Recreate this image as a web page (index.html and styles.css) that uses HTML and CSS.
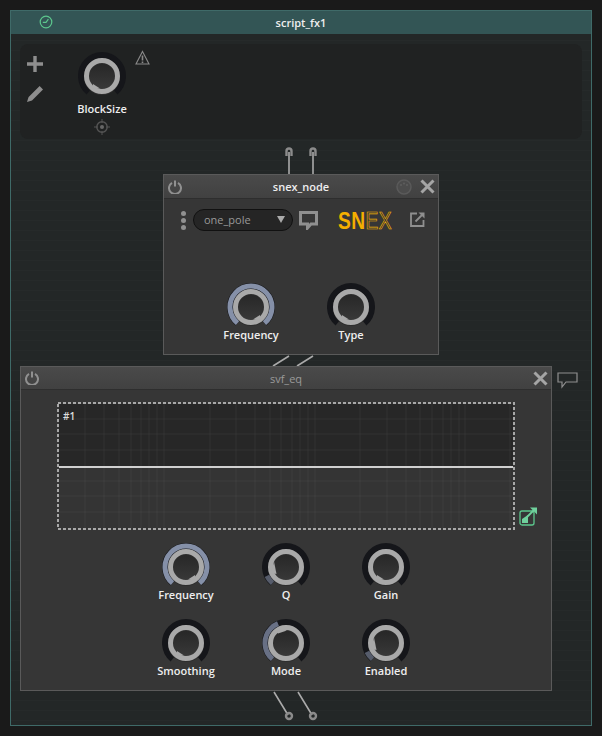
FILE: index.html

```html
<html>
<head>
    <title>script_fx1</title>
    <link rel="stylesheet" href="styles.css">
</head>
<body>
    <svg class="defs" width="0" height="0">
        <defs>
            <linearGradient id="knobFace" x1="0" y1="0" x2="0" y2="1">
                <stop offset="0" stop-color="#262626"/>
                <stop offset="1" stop-color="#393939"/>
            </linearGradient>
            <symbol id="knob" viewBox="0 0 48 48">
                <path d="M10.5 40.1A21 21 0 1 1 37.5 40.1" fill="none" stroke="#15161a" stroke-width="6"/>
                <circle cx="24" cy="24" r="14" fill="url(#knobFace)"/>
                <circle cx="24" cy="25" r="15.5" fill="none" stroke="#2e2e2e" stroke-width="5"/>
                <circle cx="24" cy="24" r="15.5" fill="none" stroke="#a9a9a9" stroke-width="5"/>
            </symbol>
            <symbol id="power" viewBox="0 0 14 14">
                <path d="M4 2.8A6 6 0 1 0 10 2.8" fill="none" stroke="#909090" stroke-width="2"/>
                <path d="M7 0.5V6.5" stroke="#909090" stroke-width="2"/>
            </symbol>
            <symbol id="close" viewBox="0 0 15 15">
                <path d="M1.5 1.5L13.5 13.5M13.5 1.5L1.5 13.5" stroke="#a5a5a5" stroke-width="3"/>
            </symbol>
        </defs>
    </svg>

    <div class="canvas">
        <div class="title-bar">
            <svg class="clock" width="14" height="14" viewBox="0 0 14 14">
                <circle cx="7" cy="7" r="5.8" fill="none" stroke="#5cc78d" stroke-width="1.2"/>
                <path d="M9.4 4.2L7 7.4H3.8" fill="none" stroke="#5cc78d" stroke-width="1.2"/>
            </svg>
            <span>script_fx1</span>
        </div>

        <div class="params">
            <div class="param-tools">
                <svg width="16" height="16" viewBox="0 0 16 16"><path d="M8 0V16M0 8H16" stroke="#8e8e8e" stroke-width="3.4"/></svg>
                <svg width="16" height="16" viewBox="0 0 16 16"><path d="M12.6 0L16 3.4 5 14.4 0 16 1.6 11z" fill="#8e8e8e"/></svg>
            </div>
            <div class="knob knob-big">
                <svg width="48" height="48" viewBox="0 0 48 48">
                    <use href="#knob"/>
                    <path class="tick" d="M15 32L22 36.500L15 37z"/>
                </svg>
                <label>BlockSize</label>
                <svg class="target" width="16" height="16" viewBox="0 0 16 16">
                    <circle cx="8" cy="8" r="5.200" fill="none" stroke="#555" stroke-width="1.400"/>
                    <circle cx="8" cy="8" r="2" fill="#666"/>
                    <path d="M8 0V4M8 12V16M0 8H4M12 8H16" stroke="#555"/>
                </svg>
            </div>
            <svg class="warning" width="15" height="15" viewBox="0 0 15 15">
                <path d="M7.500 1.500L14 14H1z" fill="none" stroke="#8a8a8a" stroke-width="1.100"/>
                <path d="M7.500 5.500V10.500M7.500 11.400V13" stroke="#8a8a8a" stroke-width="1.600"/>
            </svg>
        </div>

        <!-- cables between the nodes -->
        <svg class="cables" width="602" height="736" viewBox="0 0 602 736">
            <g fill="none" stroke="#aaa" stroke-width="1.600">
                <path d="M289 152V175M313 152V175"/>
                <path d="M273 366L289 356M297 366L313 356"/>
                <path d="M274 692L288 715M298 692L312 715"/>
            </g>
            <g fill="none" stroke="#8b8b8b" stroke-width="2.400">
                <path d="M286.500 156V151A2.500 2.500 0 0 1 291.500 151V156"/>
                <path d="M310.500 156V151A2.500 2.500 0 0 1 315.500 151V156"/>
                <circle cx="289" cy="716" r="3"/>
                <circle cx="313" cy="716" r="3"/>
            </g>
        </svg>

        <div class="node node-snex">
            <div class="node-header">
                <svg class="icon" width="14" height="14"><use href="#power"/></svg>
                <span class="node-title">snex_node</span>
                <svg class="midi" width="16" height="16" viewBox="0 0 16 16">
                    <circle cx="8" cy="8" r="7" fill="#4c4c4c" stroke="#5a5a5a" stroke-width="1.500"/>
                    <circle cx="5" cy="6" r="1" fill="#5e5e5e"/>
                    <circle cx="8" cy="4.500" r="1" fill="#5e5e5e"/>
                    <circle cx="11" cy="6" r="1" fill="#5e5e5e"/>
                </svg>
                <svg class="icon" width="15" height="15"><use href="#close"/></svg>
            </div>
            <div class="node-body">
                <div class="snex-tools">
                    <span class="dots"><i></i><i></i><i></i></span>
                    <div class="dropdown">one_pole<span class="arrow"></span></div>
                    <svg class="bubble" width="19" height="19" viewBox="0 0 19 19">
                        <path d="M1.500 1.500H17.500V13H12L8.500 17V13H1.500z" fill="none" stroke="#8f8f8f" stroke-width="3"/>
                    </svg>
                    <div class="snex-logo"><b>SN</b><em>EX</em></div>
                    <svg class="popout" width="15" height="15" viewBox="0 0 15 15">
                        <path d="M7 1.500H1V14H13.500V8" fill="none" stroke="#8f8f8f" stroke-width="1.800"/>
                        <path d="M8.500 0.500H14.500V6.500z" fill="#8f8f8f"/>
                        <path d="M5.500 9.500L12 3" stroke="#8f8f8f" stroke-width="1.800"/>
                    </svg>
                </div>
                <div class="knob-grid">
                    <div class="knob">
                        <svg width="48" height="48" viewBox="0 0 48 48">
                            <use href="#knob"/>
                            <path class="value" d="M10.500 40.100A21 21 0 1 1 37.500 40.100" pathLength="100" stroke-dasharray="100 100"/>
                            <path class="tick" d="M33 32L26 36.500L33 37z"/>
                        </svg>
                        <label>Frequency</label>
                    </div>
                    <div class="knob">
                        <svg width="48" height="48" viewBox="0 0 48 48">
                            <use href="#knob"/>
                            <path class="tick" d="M15 32L22 36.500L15 37z"/>
                        </svg>
                        <label>Type</label>
                    </div>
                </div>
            </div>
        </div>

        <svg class="comment" width="21" height="17" viewBox="0 0 21 17">
            <path d="M1 1H20V10H9L5 15V10H1z" fill="none" stroke="#8f8f8f" stroke-width="1.200"/>
        </svg>

        <div class="node node-svf">
            <div class="node-header">
                <svg class="icon" width="14" height="14"><use href="#power"/></svg>
                <span class="node-title dim">svf_eq</span>
                <svg class="icon" width="15" height="15"><use href="#close"/></svg>
            </div>
            <div class="node-body">
                <div class="graph-row">
                    <div class="graph">
                        <svg width="458" height="128" viewBox="0 0 458 128">
                            <rect x="2" y="2" width="454" height="62" fill="#272727"/>
                            <rect x="2" y="64" width="454" height="62" fill="#343434"/>
                            <g stroke="#ffffff" stroke-opacity="0.050">
                                <path d="M2 17H456M2 32H456M2 48H456M2 79H456M2 94H456M2 110H456"/>
                                <path d="M28 2V126M47 2V126M62 2V126M74 2V126M84 2V126M92 2V126M100 2V126M107 2V126M153 2V126M179 2V126M198 2V126M213 2V126M224 2V126M235 2V126M243 2V126M251 2V126M258 2V126M303 2V126M330 2V126M349 2V126M363 2V126M375 2V126M386 2V126M394 2V126M402 2V126M408 2V126M453 2V126"/>
                            </g>
                            <path d="M2 65H456" stroke="#d0d0d0" stroke-width="2"/>
                            <rect x="1" y="1" width="456" height="126" fill="none" stroke="#a8a8a8" stroke-width="2" stroke-dasharray="3 2"/>
                        </svg>
                        <span class="graph-tag">#1</span>
                    </div>
                    <svg class="graph-open" width="18" height="19" viewBox="0 0 18 19">
                        <rect x="1" y="4" width="14" height="14" rx="2" fill="none" stroke="#5cc78d" stroke-width="1.300"/>
                        <path d="M3 16V12L9 8V16z" fill="#6fd09c"/>
                        <path d="M11 0.500H18V7.500z" fill="#6fd09c"/>
                        <path d="M8 10L15 3" stroke="#6fd09c" stroke-width="1.800"/>
                    </svg>
                </div>
                <div class="knob-grid">
                    <div class="knob">
                        <svg width="48" height="48" viewBox="0 0 48 48">
                            <use href="#knob"/>
                            <path class="value" d="M10.500 40.100A21 21 0 1 1 37.500 40.100" pathLength="100" stroke-dasharray="100 100"/>
                            <path class="tick" d="M33 32L26 36.500L33 37z"/>
                        </svg>
                        <label>Frequency</label>
                    </div>
                    <div class="knob">
                        <svg width="48" height="48" viewBox="0 0 48 48">
                            <use href="#knob"/>
                            <path class="value value-low" d="M10.500 40.100A21 21 0 1 1 37.500 40.100" pathLength="100" stroke-dasharray="9 100"/>
                            <path class="tick" d="M12 18.500L14.500 31L9 30z"/>
                        </svg>
                        <label>Q</label>
                    </div>
                    <div class="knob">
                        <svg width="48" height="48" viewBox="0 0 48 48">
                            <use href="#knob"/>
                            <path class="tick" d="M15 32L22 36.500L15 37z"/>
                        </svg>
                        <label>Gain</label>
                    </div>
                    <div class="knob">
                        <svg width="48" height="48" viewBox="0 0 48 48">
                            <use href="#knob"/>
                            <path class="tick" d="M15 32L22 36.500L15 37z"/>
                        </svg>
                        <label>Smoothing</label>
                    </div>
                    <div class="knob">
                        <svg width="48" height="48" viewBox="0 0 48 48">
                            <use href="#knob"/>
                            <path class="value value-mid" d="M10.500 40.100A21 21 0 1 1 37.500 40.100" pathLength="100" stroke-dasharray="42 100"/>
                            <path class="tick" d="M15 9L25 11.500L16 14.500z"/>
                        </svg>
                        <label>Mode</label>
                    </div>
                    <div class="knob">
                        <svg width="48" height="48" viewBox="0 0 48 48">
                            <use href="#knob"/>
                            <path class="value value-low" d="M10.500 40.100A21 21 0 1 1 37.500 40.100" pathLength="100" stroke-dasharray="9 100"/>
                            <path class="tick" d="M12 18.500L14.500 31L9 30z"/>
                        </svg>
                        <label>Enabled</label>
                    </div>
                </div>
            </div>
        </div>
    </div>
</body>
</html>
```

FILE: styles.css

```css
html, body {
    margin: 0;
    height: 736px;
    overflow: hidden;
    background: #1a1a1a;
    font-family: "Open Sans", "Liberation Sans", sans-serif;
}

.defs {
    display: block;
}

/* the node canvas, nodes sit on it freely */
.canvas {
    position: absolute;
    left: 10px;
    top: 10px;
    width: 580px;
    height: 714px;
    border: 1px solid #3f6a68;
    background: repeating-linear-gradient(to bottom, #232727 0, #232727 9px, #262a2a 9px, #262a2a 10px);
}

.title-bar {
    position: relative;
    height: 23px;
    background: #335555;
    color: #eee;
    font-size: 11px;
    font-weight: 600;
    display: flex;
    align-items: center;
    justify-content: center;
}

.clock {
    position: absolute;
    left: 28px;
    top: 4px;
}

.params {
    margin: 10px 9px 0 9px;
    height: 95px;
    box-sizing: border-box;
    background: #202222;
    border-radius: 8px;
    padding: 8px 0 0 7px;
    display: flex;
    align-items: flex-start;
}

.param-tools {
    display: flex;
    flex-direction: column;
    gap: 14px;
    padding-top: 4px;
    width: 47px;
}

.warning {
    margin: -2px 0 0 5px;
}

.cables {
    position: absolute;
    left: -11px;
    top: -11px;
}

.node {
    position: absolute;
    box-sizing: border-box;
    border: 1px solid #5a5a5a;
    background: #3a3a3a;
}

.node-snex {
    left: 152px;
    top: 163px;
    width: 276px;
    height: 181px;
}

.node-svf {
    left: 9px;
    top: 355px;
    width: 532px;
    height: 325px;
}

.node-header {
    position: relative;
    box-sizing: border-box;
    padding: 0 3px 0 4px;
    background: linear-gradient(to bottom, #4a4a4a, #414141);
    border-bottom: 1px solid #2e2e2e;
    display: flex;
    align-items: center;
    gap: 4px;
}

.node-snex .node-header {
    height: 24px;
}

.node-svf .node-header {
    height: 23px;
}

.node-title {
    position: absolute;
    left: 0;
    right: 0;
    text-align: center;
    color: #eee;
    font-size: 11px;
    font-weight: 600;
}

.node-title.dim {
    color: #9a9a9a;
    font-weight: 400;
}

.icon {
    flex: none;
}

.midi {
    margin-left: auto;
    margin-right: 4px;
}

.node-svf .node-header > .icon:last-child {
    margin-left: auto;
}

.node-body {
    background: #363636;
}

.node-snex .node-body {
    height: 155px;
}

.node-svf .node-body {
    height: 300px;
}

.snex-tools {
    height: 44px;
    padding: 10px 0 0 17px;
    box-sizing: border-box;
    display: flex;
    align-items: flex-start;
}

.dots {
    display: flex;
    flex-direction: column;
    gap: 2px;
    margin: 2px 7px 0 0;
}

.dots i {
    display: block;
    width: 5px;
    height: 5px;
    border-radius: 50%;
    background: #909090;
}

.dropdown {
    position: relative;
    box-sizing: border-box;
    width: 100px;
    height: 22px;
    margin-right: 6px;
    padding-left: 10px;
    border: 1px solid #111;
    border-radius: 11px;
    background: #252525;
    color: #999;
    font-size: 11px;
    line-height: 20px;
}

.arrow {
    position: absolute;
    right: 7px;
    top: 6px;
    border-left: 4px solid transparent;
    border-right: 4px solid transparent;
    border-top: 7px solid #aaa;
}

.bubble {
    margin-top: 2px;
}

.snex-logo {
    width: 54px;
    margin: 1px 18px 0 20px;
    font-family: "Liberation Sans", sans-serif;
    font-size: 24px;
    line-height: 22px;
    letter-spacing: 0.5px;
    white-space: nowrap;
    transform: scaleX(0.8);
    transform-origin: left center;
}

.snex-logo b {
    color: #f4ae00;
}

.snex-logo em {
    font-style: normal;
    font-weight: 400;
    color: transparent;
    -webkit-text-stroke: 0.7px #f0b000;
}

.popout {
    margin-top: 3px;
}

.knob-grid {
    display: grid;
    grid-template-columns: repeat(3, 100px);
    grid-auto-rows: 76px;
    justify-content: center;
}

.node-snex .knob-grid {
    grid-template-columns: repeat(2, 100px);
    padding-top: 40px;
}

.knob {
    display: flex;
    flex-direction: column;
    align-items: center;
}

.knob svg {
    display: block;
}

.knob label {
    color: #eee;
    font-size: 11px;
    font-weight: 600;
    line-height: 14px;
    margin-top: -3px;
    white-space: nowrap;
}

.knob-big {
    width: 56px;
}

.knob-big label {
    margin-top: 2px;
}

.target {
    margin-top: 3px;
}

.value {
    fill: none;
    stroke: #8590a8;
    stroke-width: 5;
}

.value-mid {
    stroke: #687085;
}

.value-low {
    stroke: #565c6b;
}

.tick {
    fill: #a9a9a9;
}

.graph-row {
    display: flex;
    align-items: flex-end;
    padding: 12px 0 0 36px;
    gap: 4px;
}

.graph {
    position: relative;
    width: 458px;
    height: 128px;
}

.graph svg {
    display: block;
}

.graph-tag {
    position: absolute;
    left: 6px;
    top: 7px;
    color: #ddd;
    font-size: 10px;
    font-weight: 600;
    line-height: 14px;
}

.graph-open {
    margin-bottom: 4px;
}

.node-svf .knob-grid {
    padding-top: 13px;
}

.comment {
    position: absolute;
    left: 546px;
    top: 361px;
}
```
